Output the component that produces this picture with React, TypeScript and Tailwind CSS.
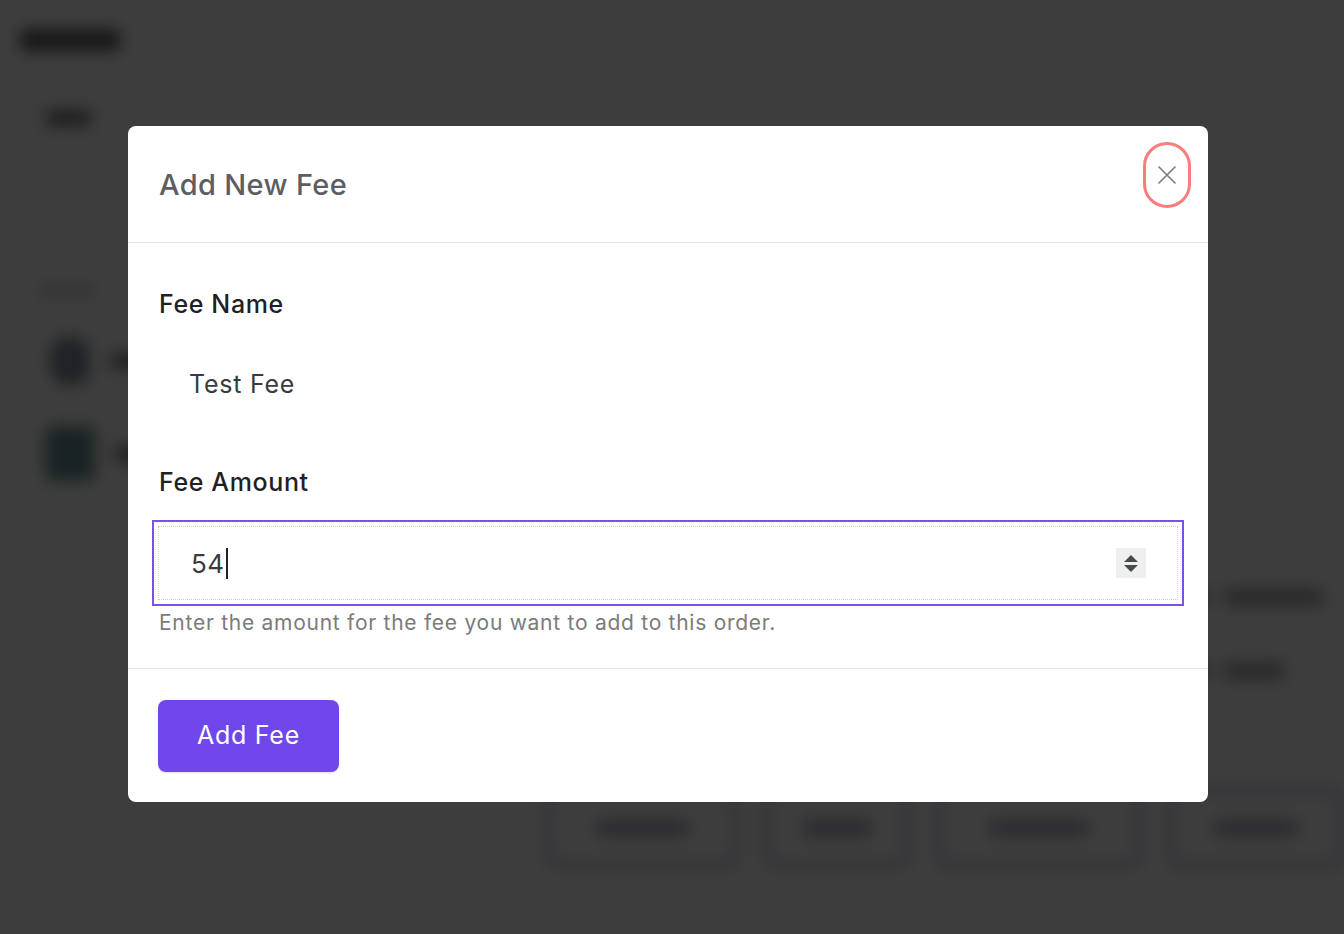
import React from 'react';

function BackgroundPage() {
  return (
    <div className="w-[1344px] h-[934px] bg-white overflow-hidden [filter:blur(8px)]">
      <div className="flex">
        {/* Left column */}
        <div className="w-[550px] pl-[20px] pt-[30px]">
          <div className="h-[20px] w-[100px] rounded bg-[#555]" />
          <div className="mt-[35px] ml-[10px] h-[66px] w-[515px] border border-[#e5e5e5] rounded-md flex items-center justify-between px-[15px]">
            <div className="h-[14px] w-[45px] rounded bg-[#666]" />
            <div className="h-[40px] w-[40px] rounded border border-[#ddd]" />
          </div>
          <div className="mt-[135px] ml-[20px] h-[10px] w-[55px] rounded bg-[#ccc]" />
          <div className="mt-[40px] ml-[30px] flex items-center gap-[20px]">
            <div className="h-[50px] w-[40px] rounded-full bg-[#8090a0]" />
            <div className="h-[14px] w-[60px] rounded bg-[#777]" />
          </div>
          <div className="mt-[40px] ml-[25px] flex items-center gap-[20px]">
            <div className="h-[55px] w-[50px] rounded-lg bg-[#6a9098]" />
            <div className="h-[14px] w-[60px] rounded bg-[#777]" />
          </div>
        </div>
        {/* Right column */}
        <div className="flex-1 pt-[240px] pr-[20px]">
          <div className="h-[290px] border border-[#e5e5e5] rounded-md" />
          <div className="mt-[60px] flex justify-end gap-4">
            <div className="h-[14px] w-[40px] rounded bg-[#999]" />
            <div className="h-[14px] w-[100px] rounded bg-[#999]" />
          </div>
          <div className="mt-[60px] flex justify-end gap-4 pr-[40px]">
            <div className="h-[14px] w-[30px] rounded bg-[#999]" />
            <div className="h-[14px] w-[60px] rounded bg-[#999]" />
          </div>
        </div>
      </div>
      <div className="mt-[110px] ml-[545px] flex gap-[25px]">
        {[220, 165, 235, 200].map((w, i) => (
          <div key={i} className="h-[80px] rounded-xl border-[6px] border-[#c8c8f0] bg-white flex items-center justify-center" style={{ width: w }}>
            <div className="h-[14px] w-1/2 rounded bg-[#a0a0c8]" />
          </div>
        ))}
      </div>
    </div>
  );
}

function FieldLabel({ children }: { children: React.ReactNode }) {
  return (
    <div className="h-[36px] leading-[36px] text-[25px] tracking-[0.025em] font-medium text-[#1f2125]">{children}</div>
  );
}

export default function App() {
  return (
    <div className="relative w-[1344px] h-[934px] overflow-hidden" style={{ fontFamily: 'Inter, "Noto Sans", sans-serif' }}>
      <BackgroundPage />
      <div className="absolute inset-0 bg-black/[0.76]">
        <div className="ml-[128px] mt-[126px] w-[1080px] bg-white rounded-lg">
          {/* Header */}
          <div className="h-[117px] flex items-start justify-between border-b border-[#e5e5ea]">
            <h2 className="pl-[31px] pt-[41px] text-[29px] tracking-[0.012em] leading-[36px] font-medium text-[#5c5e64]">Add New Fee</h2>
            <button className="mt-[16px] mr-[17px] w-[48px] h-[66px] rounded-full border-[3px] border-[#fb7c7c] flex items-center justify-center">
              <svg width="18" height="18" viewBox="0 0 18 18" fill="none" stroke="#7a7a7a" strokeWidth="1.6" strokeLinecap="round">
                <path d="M1 1 L17 17 M17 1 L1 17" />
              </svg>
            </button>
          </div>

          {/* Body */}
          <div className="pt-[43px] pb-[31px] px-[24px]">
            <div className="pl-[7px]">
              <FieldLabel>Fee Name</FieldLabel>
            </div>
            <div className="mt-[20px] h-[86px] flex items-center pl-[37px] text-[25px] tracking-[0.03em] text-[#3a3b40]">Test Fee</div>

            <div className="mt-[36px] pl-[7px]">
              <FieldLabel>Fee Amount</FieldLabel>
            </div>
            <div className="mt-[20px] border-2 border-[#7a50e6] p-[4px]">
              <div className="h-[74px] border border-dotted border-[#cfcfcf] flex items-center justify-between pl-[32px] pr-[31px]">
                <div className="flex items-center text-[26px] tracking-[0.02em] text-[#3a3b40]">
                  54<span className="ml-[1px] inline-block w-[2px] h-[31px] bg-[#222]" />
                </div>
                <div className="w-[30px] h-[30px] bg-[#eef0ef] flex flex-col items-center justify-center gap-[3px]">
                  <svg width="14" height="7" viewBox="0 0 14 7"><path d="M7 0 L14 7 L0 7 Z" fill="#4a4a4a" /></svg>
                  <svg width="14" height="7" viewBox="0 0 14 7"><path d="M0 0 L14 0 L7 7 Z" fill="#4a4a4a" /></svg>
                </div>
              </div>
            </div>
            <p className="pl-[7px] mt-[3px] text-[21px] tracking-[0.035em] leading-[28px] text-[#7b7b7b]">Enter the amount for the fee you want to add to this order.</p>
          </div>

          {/* Footer */}
          <div className="border-t border-[#e5e5ea] pt-[31px] pb-[30px] px-[30px]">
            <button className="w-[181px] h-[72px] rounded-lg bg-[#7047eb] text-white text-[25px] tracking-[0.03em] shadow-sm">Add Fee</button>
          </div>
        </div>
      </div>
    </div>
  );
}
